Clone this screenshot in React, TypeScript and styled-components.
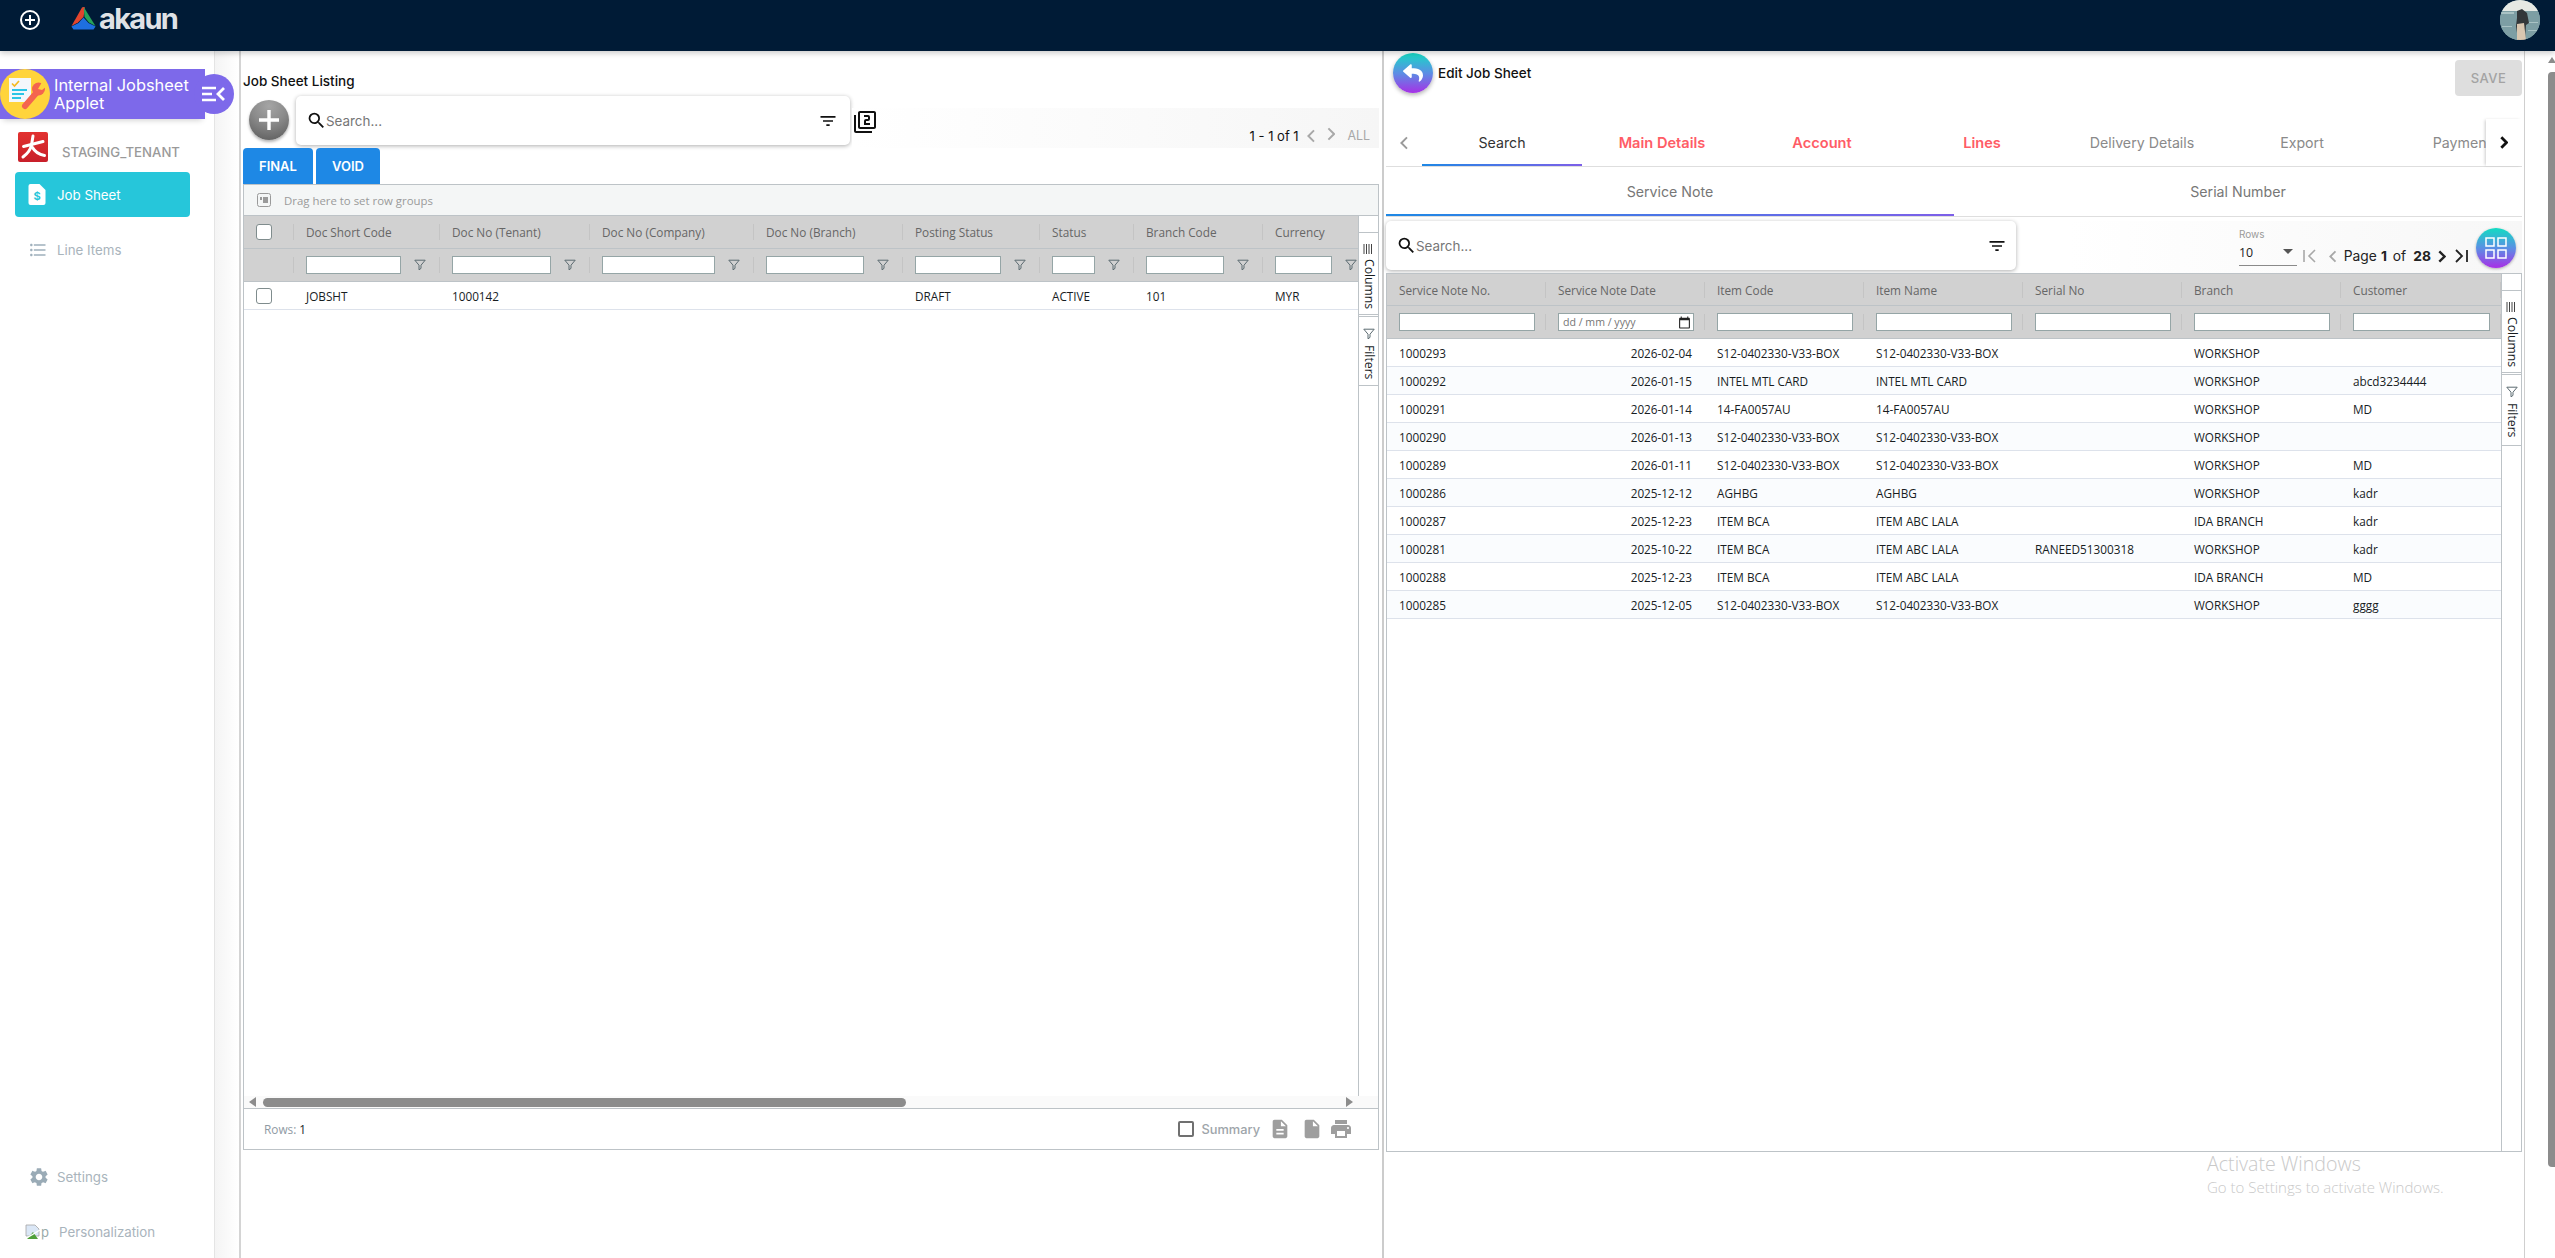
import React from "react";
import styled, { createGlobalStyle } from "styled-components";
import {
  MdCalendarToday,
  MdDescription,
  MdFilterList,
  MdFormatListBulleted,
  MdInsertDriveFile,
  MdOutlineFilter2,
  MdPrint,
  MdSearch,
  MdSettings,
} from "react-icons/md";
import { FaReply } from "react-icons/fa";

const UI_FONT = `Inter, "Noto Sans", sans-serif`;
const GRID_FONT = `"Open Sans", "Noto Sans", sans-serif`;

const GlobalStyle = createGlobalStyle`
  html, body {
    margin: 0;
    padding: 0;
    background: #fff;
    overflow: hidden;
  }
  * {
    box-sizing: border-box;
  }
`;

interface Column {
  title: string;
  width: number;
  funnel?: boolean;
  date?: boolean;
  align?: "right";
}

const leftColumns: Column[] = [
  { title: "Doc Short Code", width: 146, funnel: true },
  { title: "Doc No (Tenant)", width: 150, funnel: true },
  { title: "Doc No (Company)", width: 164, funnel: true },
  { title: "Doc No (Branch)", width: 149, funnel: true },
  { title: "Posting Status", width: 137, funnel: true },
  { title: "Status", width: 94, funnel: true },
  { title: "Branch Code", width: 129, funnel: true },
  { title: "Currency", width: 108, funnel: true },
];

const leftRows = [["JOBSHT", "1000142", "", "", "DRAFT", "ACTIVE", "101", "MYR"]];

const rightColumns: Column[] = [
  { title: "Service Note No.", width: 159 },
  { title: "Service Note Date", width: 159, date: true, align: "right" },
  { title: "Item Code", width: 159 },
  { title: "Item Name", width: 159 },
  { title: "Serial No", width: 159 },
  { title: "Branch", width: 159 },
  { title: "Customer", width: 160 },
];

const S12 = "S12-0402330-V33-BOX";

const rightRows = [
  ["1000293", "2026-02-04", S12, S12, "", "WORKSHOP", ""],
  ["1000292", "2026-01-15", "INTEL MTL CARD", "INTEL MTL CARD", "", "WORKSHOP", "abcd3234444"],
  ["1000291", "2026-01-14", "14-FA0057AU", "14-FA0057AU", "", "WORKSHOP", "MD"],
  ["1000290", "2026-01-13", S12, S12, "", "WORKSHOP", ""],
  ["1000289", "2026-01-11", S12, S12, "", "WORKSHOP", "MD"],
  ["1000286", "2025-12-12", "AGHBG", "AGHBG", "", "WORKSHOP", "kadr"],
  ["1000287", "2025-12-23", "ITEM BCA", "ITEM ABC LALA", "", "IDA BRANCH", "kadr"],
  ["1000281", "2025-10-22", "ITEM BCA", "ITEM ABC LALA", "RANEED51300318", "WORKSHOP", "kadr"],
  ["1000288", "2025-12-23", "ITEM BCA", "ITEM ABC LALA", "", "IDA BRANCH", "MD"],
  ["1000285", "2025-12-05", S12, S12, "", "WORKSHOP", "gggg"],
];

const topTabs = [
  { label: "Search", active: true },
  { label: "Main Details", error: true },
  { label: "Account", error: true },
  { label: "Lines", error: true },
  { label: "Delivery Details" },
  { label: "Export" },
  { label: "Payment" },
];

const Page = styled.div`
  position: relative;
  width: 2555px;
  height: 1258px;
  display: flex;
  flex-direction: column;
  overflow: hidden;
  font-family: ${UI_FONT};
  background: #fff;
`;

const TopBar = styled.header`
  position: relative;
  z-index: 3;
  height: 51px;
  flex: none;
  display: flex;
  align-items: flex-start;
  background: #001b36;
  box-shadow: 0 2px 6px rgba(0, 0, 0, 0.22);
  padding: 0 15px 0 20px;
`;

const AddRound = styled.div`
  width: 20px;
  height: 20px;
  margin-top: 10px;
  border: 2px solid #fff;
  border-radius: 50%;
  display: flex;
  align-items: center;
  justify-content: center;
  svg {
    display: block;
  }
`;

const Logo = styled.div`
  display: flex;
  align-items: flex-start;
  margin: 7px 0 0 31px;
  color: #dfe2e6;
  svg {
    display: block;
  }
`;

const LogoText = styled.span`
  font-family: ${UI_FONT};
  font-weight: 700;
  font-size: 29px;
  line-height: 26px;
  letter-spacing: -1.7px;
  margin: -1px 0 0 3px;
`;

const Avatar = styled.div`
  margin-left: auto;
  width: 40px;
  height: 40px;
  border-radius: 50%;
  overflow: hidden;
  svg {
    display: block;
  }
`;

const Body = styled.div`
  flex: 1;
  display: flex;
  min-height: 0;
`;

const Sidebar = styled.aside`
  position: relative;
  width: 215px;
  flex: none;
  display: flex;
  flex-direction: column;
  padding-top: 18px;
  border-right: 1px solid #e4e4e4;
`;

const Strip = styled.div`
  width: 26px;
  flex: none;
  border-right: 2px solid #d4d4d4;
  background: linear-gradient(90deg, #f4f4f4, #ffffff);
`;

const Banner = styled.div`
  width: 205px;
  height: 50px;
  flex: none;
  display: flex;
  align-items: center;
  gap: 4px;
  background: #7d69ea;
  box-shadow: 0 4px 6px -3px rgba(0, 0, 0, 0.2);
`;

const BannerIcon = styled.div`
  flex: none;
  width: 50px;
  height: 50px;
  svg {
    display: block;
  }
`;

const BannerTitle = styled.div`
  color: #fff;
  font-size: 16.4px;
  line-height: 18px;
  font-weight: 400;
`;

const Toggle = styled.div`
  position: absolute;
  z-index: 2;
  left: 194px;
  top: 23px;
  width: 40px;
  height: 40px;
  border-radius: 50%;
  background: #7d69ea;
  display: flex;
  align-items: center;
  justify-content: center;
`;

const TenantRow = styled.div`
  display: flex;
  align-items: flex-end;
  gap: 14px;
  margin: 13px 0 0 18px;
  height: 30px;
`;

const TenantLogo = styled.div`
  width: 30px;
  height: 30px;
  svg {
    display: block;
  }
`;

const TenantName = styled.span`
  color: #9a9a9a;
  font-size: 13.2px;
  font-weight: 500;
  line-height: 20px;
`;

const NavItem = styled.div<{ $active?: boolean; $top?: number; $gap?: number }>`
  display: flex;
  align-items: center;
  gap: ${(p) => p.$gap ?? 11}px;
  width: 175px;
  height: 45px;
  margin: ${(p) => p.$top ?? 0}px 0 0 15px;
  padding-left: 13px;
  border-radius: 4px;
  font-size: 13.3px;
  font-weight: 400;
  background: ${(p) => (p.$active ? "#26c6da" : "transparent")};
  color: ${(p) => (p.$active ? "#fff" : "#a9b4bc")};
  svg {
    flex: none;
  }
`;

const SideFooter = styled.div`
  margin-top: auto;
  padding-bottom: 4px;
  display: flex;
  flex-direction: column;
  gap: 10px;
`;

const BrokenAlt = styled.span`
  display: inline-flex;
  align-items: flex-start;
  width: 23px;
  margin-left: -3px;
  margin-right: -1px;
  font-size: 13px;
  color: #9aa;
  svg {
    display: block;
  }
`;

const Panels = styled.main`
  flex: 1;
  min-width: 0;
  display: flex;
`;

const LeftPanel = styled.section`
  width: 1141px;
  flex: none;
  padding: 21px 3px 0 2px;
  display: flex;
  flex-direction: column;
`;

const Splitter = styled.div`
  width: 2px;
  flex: none;
  background: #cccccc;
`;

const RightPanel = styled.section`
  width: 1140px;
  flex: none;
  padding: 0 2px;
  display: flex;
  flex-direction: column;
`;

const PageEdge = styled.div`
  flex: 1;
  position: relative;
  border-left: 1px solid #cfcfcf;
  display: flex;
  justify-content: flex-end;
`;

const PageScroll = styled.div`
  width: 7px;
  display: flex;
  flex-direction: column;
  align-items: center;
`;

const ArrowUp = styled.div`
  margin-top: 6px;
  width: 0;
  height: 0;
  border-left: 4px solid transparent;
  border-right: 4px solid transparent;
  border-bottom: 6px solid #8c8c8c;
`;

const PageThumb = styled.div`
  margin-top: 9px;
  width: 7px;
  height: 1095px;
  background: #8c8c8c;
  border-radius: 4px 0 0 4px;
`;

const ListingTitle = styled.div`
  font-size: 13.5px;
  line-height: 18px;
  font-weight: 500;
  color: #111;
`;

const Toolbar = styled.div`
  display: flex;
  align-items: flex-start;
  margin-top: 6px;
  height: 52px;
`;

const AddButton = styled.div`
  flex: none;
  width: 40px;
  height: 40px;
  margin: 4px 7px 0 6px;
  border-radius: 50%;
  background: radial-gradient(circle at 50% 15%, #a5a5a5, #8a8a8a 45%, #585858 100%);
  box-shadow: 0 2px 3px rgba(0, 0, 0, 0.3);
  display: flex;
  align-items: center;
  justify-content: center;
`;

const SearchCard = styled.div<{ $width: number; $padRight: number }>`
  flex: none;
  width: ${(p) => p.$width}px;
  height: 49px;
  background: #fff;
  border-radius: 5px;
  box-shadow: 0 1px 4px rgba(0, 0, 0, 0.32);
  display: flex;
  align-items: center;
  padding: 0 ${(p) => p.$padRight}px 0 10px;
  color: #111;
`;

const SearchText = styled.span`
  flex: 1;
  margin-left: -1px;
  font-size: 13.4px;
  color: #767676;
`;

const PagerStrip = styled.div`
  flex: 1;
  height: 40px;
  margin: 12px 0 0 2px;
  display: flex;
  align-items: flex-start;
  justify-content: space-between;
  padding: 2px 9px 0 1px;
  background: linear-gradient(90deg, #ffffff, #f6f6f6);
  color: #111;
`;

const PagerRight = styled.div`
  display: flex;
  align-items: center;
  gap: 8px;
  margin-top: 17px;
  font-size: 13px;
  line-height: 16px;
  svg {
    color: #a8a8a8;
  }
`;

const AllLabel = styled.span`
  margin-left: 4px;
  color: #a8a8a8;
  font-size: 12.4px;
`;

const StatusTabs = styled.div`
  display: flex;
  gap: 3px;
  height: 36px;
  flex: none;
`;

const StatusTab = styled.div`
  padding: 0 16px;
  background: #1e88e5;
  color: #fff;
  font-size: 13px;
  font-weight: 600;
  border-radius: 4px 4px 0 0;
  display: flex;
  align-items: center;
  justify-content: center;
`;

const GridFrame = styled.div<{ $height: number }>`
  height: ${(p) => p.$height}px;
  flex: none;
  display: flex;
  flex-direction: column;
  border: 1px solid #bdc3c7;
  background: #fff;
  font-family: ${GRID_FONT};
`;

const GroupPanel = styled.div`
  height: 31px;
  flex: none;
  display: flex;
  align-items: center;
  gap: 13px;
  padding-left: 13px;
  background: #f4f6f6;
  color: #9a9a9a;
  font-size: 11.4px;
  border-bottom: 1px solid #bdc3c7;
`;

const GridBody = styled.div`
  flex: 1;
  min-height: 0;
  display: flex;
`;

const TableArea = styled.div`
  flex: 1;
  min-width: 0;
  overflow: hidden;
  display: flex;
  flex-direction: column;
`;

const HeadRow = styled.div<{ $height: number }>`
  display: flex;
  flex: none;
  height: ${(p) => p.$height}px;
  background: #d1d1d1;
  border-bottom: 1px solid #bdc3c7;
  color: #666;
  font-size: 11.8px;
  font-weight: 500;
`;

const HeadCell = styled.div<{ $width: number; $pad?: number }>`
  position: relative;
  flex: none;
  width: ${(p) => p.$width}px;
  display: flex;
  align-items: center;
  padding: 0 0 0 ${(p) => p.$pad ?? 12}px;
  white-space: nowrap;
  &::after {
    content: "";
    position: absolute;
    right: 0;
    top: 50%;
    height: 16px;
    margin-top: -8px;
    width: 1px;
    background: #c4c4c4;
  }
`;

const FilterInput = styled.div<{ $width: number }>`
  flex: none;
  width: ${(p) => p.$width}px;
  height: 18px;
  background: #fff;
  border: 1px solid #95a5a6;
`;

const DateInput = styled(FilterInput)`
  display: flex;
  align-items: center;
  justify-content: space-between;
  padding: 0 2px 0 4px;
  color: #757575;
  font-size: 10.6px;
  font-weight: 400;
  svg {
    color: #222;
  }
`;

const FunnelSlot = styled.div`
  position: absolute;
  right: 14px;
  top: 50%;
  margin-top: -6px;
  width: 12px;
  height: 12px;
  svg {
    display: block;
  }
`;

const Check = styled.span<{ $size?: number }>`
  display: block;
  flex: none;
  width: ${(p) => p.$size ?? 16}px;
  height: ${(p) => p.$size ?? 16}px;
  background: #fff;
  border: 1px solid #7f8c8d;
  border-radius: 3px;
`;

const DataRow = styled.div<{ $alt?: boolean }>`
  display: flex;
  flex: none;
  height: 28px;
  background: ${(p) => (p.$alt ? "#fafcfe" : "#fff")};
  border-bottom: 1px solid #dde2eb;
  color: #181d1f;
  font-size: 11.75px;
`;

const DataCell = styled.div<{ $width: number; $right?: boolean; $pad?: number }>`
  flex: none;
  width: ${(p) => p.$width}px;
  display: flex;
  align-items: center;
  justify-content: ${(p) => (p.$right ? "flex-end" : "flex-start")};
  padding: ${(p) => (p.$right ? "0 13px 0 0" : `0 0 0 ${p.$pad ?? 12}px`)};
  white-space: nowrap;
`;

const SideRail = styled.div`
  width: 20px;
  flex: none;
  border-left: 1px solid #bdc3c7;
  display: flex;
  flex-direction: column;
  padding-top: 16px;
`;

const RailButton = styled.div<{ $height: number }>`
  height: ${(p) => p.$height}px;
  flex: none;
  display: flex;
  flex-direction: column;
  align-items: center;
  gap: 5px;
  padding-top: 11px;
  border-top: 1px solid #bdc3c7;
  border-bottom: 1px solid #bdc3c7;
  color: #181d1f;
  font-size: 12.2px;
  margin-bottom: 1px;
`;

const RailLabel = styled.span`
  writing-mode: vertical-rl;
  line-height: 20px;
`;

const HScroll = styled.div`
  height: 12px;
  flex: none;
  display: flex;
  align-items: center;
  padding: 0 5px;
  background: #fafafa;
`;

const ScrollLeft = styled.div`
  width: 0;
  height: 0;
  border-top: 5px solid transparent;
  border-bottom: 5px solid transparent;
  border-right: 7px solid #8c8c8c;
`;

const ScrollRight = styled.div`
  margin-left: auto;
  margin-right: 20px;
  width: 0;
  height: 0;
  border-top: 5px solid transparent;
  border-bottom: 5px solid transparent;
  border-left: 7px solid #8c8c8c;
`;

const HThumb = styled.div`
  margin-left: 7px;
  width: 643px;
  height: 9px;
  background: #8c8c8c;
  border-radius: 5px;
`;

const StatusBar = styled.div`
  height: 41px;
  flex: none;
  border-top: 1px solid #bdc3c7;
  display: flex;
  align-items: center;
  padding: 0 25px 0 20px;
  color: #181d1f;
  font-size: 11.8px;
`;

const StatusLabel = styled.span`
  color: #8f9aa3;
  margin-right: 3px;
`;

const StatusTools = styled.div`
  margin-left: auto;
  display: flex;
  align-items: center;
  color: #9e9e9e;
  svg {
    display: block;
  }
`;

const SummaryCheck = styled.span`
  display: block;
  width: 16px;
  height: 16px;
  border: 2px solid #707070;
  border-radius: 2px;
  margin-right: 8px;
`;

const SummaryLabel = styled.span`
  font-family: ${UI_FONT};
  font-size: 12.8px;
  font-weight: 500;
  color: #9ea5aa;
  margin-right: 9px;
`;

const EditHeader = styled.div`
  height: 68px;
  flex: none;
  display: flex;
  align-items: flex-start;
  padding: 2px 0 0 7px;
`;

const BackButton = styled.div`
  width: 40px;
  height: 40px;
  flex: none;
  border-radius: 50%;
  background: linear-gradient(180deg, #16d9c4, #5b8fe4 50%, #a631e6);
  box-shadow: 0 2px 4px rgba(0, 0, 0, 0.3);
  display: flex;
  align-items: center;
  justify-content: center;
  color: #fff;
`;

const EditTitle = styled.div`
  margin: 12px 0 0 5px;
  font-size: 13.5px;
  line-height: 16px;
  font-weight: 500;
  color: #111;
`;

const SaveButton = styled.div`
  margin: 7px 0 0 auto;
  width: 67px;
  height: 36px;
  border-radius: 4px;
  background: #dedede;
  color: #a3a3a3;
  font-size: 13px;
  font-weight: 500;
  letter-spacing: 0.4px;
  display: flex;
  align-items: center;
  justify-content: center;
`;

const TabBar = styled.div`
  position: relative;
  height: 48px;
  flex: none;
  display: flex;
  border-bottom: 1px solid #dedede;
`;

const TabArrow = styled.div<{ $muted?: boolean; $shadow?: boolean }>`
  width: 36px;
  flex: none;
  display: flex;
  align-items: center;
  justify-content: center;
  color: ${(p) => (p.$muted ? "#9a9a9a" : "#111")};
  box-shadow: ${(p) => (p.$shadow ? "-2px 0 3px -1px rgba(0,0,0,.2)" : "none")};
`;

const TabScroller = styled.div`
  flex: 1;
  min-width: 0;
  overflow: hidden;
  display: flex;
`;

const TabItem = styled.div<{ $active?: boolean; $error?: boolean }>`
  position: relative;
  flex: none;
  width: 160px;
  display: flex;
  align-items: center;
  justify-content: center;
  white-space: nowrap;
  font-size: ${(p) => (p.$error ? 14.6 : 14.2)}px;
  font-weight: ${(p) => (p.$error ? 600 : 400)};
  color: ${(p) => (p.$error ? "#ff5c66" : p.$active ? "#333" : "#8a8a8a")};
  &::after {
    content: "";
    display: ${(p) => (p.$active ? "block" : "none")};
    position: absolute;
    left: 0;
    right: 0;
    bottom: 0;
    height: 2px;
    background: linear-gradient(90deg, #1e88e5, #7d5fe8);
  }
`;

const SubTabBar = styled.div`
  height: 50px;
  flex: none;
  display: flex;
  border-bottom: 1px solid #dedede;
`;

const SubTab = styled.div<{ $active?: boolean }>`
  position: relative;
  flex: 1;
  display: flex;
  align-items: center;
  justify-content: center;
  padding-bottom: 1px;
  font-size: 14.2px;
  color: #777;
  &::after {
    content: "";
    display: ${(p) => (p.$active ? "block" : "none")};
    position: absolute;
    left: 0;
    right: 0;
    bottom: 0;
    height: 2px;
    background: linear-gradient(90deg, #1e88e5, #7d5fe8);
  }
`;

const ListToolbar = styled.div`
  height: 52px;
  flex: none;
  margin-top: 4px;
  display: flex;
  align-items: flex-start;
  background: linear-gradient(90deg, #ffffff 60%, #f7f7f7);
`;

const RowsSelect = styled.div`
  margin-left: 223px;
  width: 58px;
  flex: none;
  padding-top: 7px;
`;

const RowsLabel = styled.div`
  font-size: 10px;
  line-height: 12px;
  color: #9a9a9a;
`;

const RowsValue = styled.div`
  height: 26px;
  display: flex;
  align-items: center;
  justify-content: space-between;
  padding-right: 4px;
  border-bottom: 1px solid #8a8a8a;
  font-family: ${GRID_FONT};
  font-size: 12.4px;
  color: #222;
  &::after {
    content: "";
    width: 0;
    height: 0;
    border-left: 5px solid transparent;
    border-right: 5px solid transparent;
    border-top: 5px solid #555;
    margin-top: -3px;
  }
`;

const PageNav = styled.div`
  margin: 26px 0 0 6px;
  display: flex;
  align-items: center;
  font-size: 13.8px;
  line-height: 18px;
  color: #222;
  svg {
    display: block;
  }
`;

const PageWord = styled.span<{ $gap?: number; $muted?: boolean }>`
  margin-left: ${(p) => p.$gap ?? 0}px;
  color: ${(p) => (p.$muted ? "#a8a8a8" : "inherit")};
`;

const PageStrong = styled.strong<{ $gap?: number }>`
  margin-left: ${(p) => p.$gap ?? 0}px;
  font-weight: 700;
`;

const ViewButton = styled.div`
  margin: 7px 0 0 8px;
  width: 40px;
  height: 40px;
  flex: none;
  border-radius: 50%;
  background: linear-gradient(180deg, #12dcc2, #5a90e4 50%, #a82fe6);
  box-shadow: 0 1px 3px rgba(0, 0, 0, 0.3);
  display: flex;
  align-items: center;
  justify-content: center;
`;

const ActivateNote = styled.div`
  position: absolute;
  left: 2207px;
  top: 1151px;
  color: #c9c9c9;
  font-family: "Open Sans", sans-serif;
  font-weight: 300;
  pointer-events: none;
`;

const ActivateTitle = styled.div`
  font-size: 19.6px;
  line-height: 26px;
`;

const ActivateSub = styled.div`
  font-size: 15px;
  line-height: 20px;
`;

const Funnel = () => (
  <svg width="12" height="12" viewBox="0 0 12 12" fill="none" stroke="#5b6a70" strokeWidth="1">
    <path d="M0.8 1.2h10.4L7 6.2v3.2L5 10.8V6.2z" />
  </svg>
);

const Chevron = ({ dir, size = 14, width = 2 }: { dir: "l" | "r"; size?: number; width?: number }) => (
  <svg width={size * 0.6} height={size} viewBox="0 0 6 10" fill="none" stroke="currentColor" strokeWidth={width * 0.7}>
    <path d={dir === "l" ? "M5 1L1 5l4 4" : "M1 1l4 4-4 4"} />
  </svg>
);

const LogoMark = () => (
  <svg width="25" height="23" viewBox="0 0 25 23">
    <path d="M11 0.5c0.8-0.7 2.2-0.7 3 0l0 0L12.5 10 7 15.5 0.5 19z" fill="#e2452d" />
    <path d="M12.7 0L24.5 19 18 15.5 13.5 10z" fill="#27a35a" />
    <path d="M12.5 10.5L17.5 16 24.6 19.5 22.5 22.6H2.5L0.4 19.5 7.5 16z" fill="#1e6fe0" />
  </svg>
);

const AppGlyph = () => (
  <svg width="50" height="50" viewBox="0 0 50 50">
    <circle cx="25" cy="25" r="25" fill="#ffd43b" />
    <path d="M9 9h22v24H9z" fill="#f4f7fb" />
    <path d="M12 14.5l2.5 2.5 4.5-5" fill="none" stroke="#f5b921" strokeWidth="1.7" />
    <path d="M12 21h15M12 25h12M12 29h9" stroke="#2cc5e6" strokeWidth="1.8" />
    <path d="M25 37L38 22" stroke="#f4644f" strokeWidth="6" strokeLinecap="round" />
    <circle cx="38.5" cy="20" r="6.5" fill="#f4644f" />
    <path d="M38 20l4-7 5 4-5 4z" fill="#ffd43b" />
  </svg>
);

const TenantGlyph = () => (
  <svg width="30" height="30" viewBox="0 0 30 30">
    <defs>
      <linearGradient id="tenantRed" x1="0" y1="0" x2="0" y2="1">
        <stop offset="0" stopColor="#e2312f" />
        <stop offset="1" stopColor="#c81f2a" />
      </linearGradient>
    </defs>
    <rect width="30" height="30" rx="2" fill="url(#tenantRed)" />
    <g fill="none" stroke="#fff" strokeWidth="3" strokeLinecap="round">
      <path d="M15 4L13.5 13C12.5 18 9 22 5 25" />
      <path d="M5.5 14.5L25 9.5" />
      <path d="M14.5 15.5C17 20 21 22.5 26.5 23.5" />
    </g>
  </svg>
);

const BrokenImage = () => (
  <svg width="16" height="16" viewBox="0 0 16 16">
    <path d="M1 1h9l4 4v7H1z" fill="#dbe7f6" stroke="#a4a4a4" strokeWidth="0.8" />
    <path d="M2 15l6-7 5 7z" fill="#4fa03a" />
    <path d="M0 15L15 6" stroke="#fff" strokeWidth="1.4" />
  </svg>
);

const DocDollar = () => (
  <svg width="18" height="21" viewBox="0 0 18 21">
    <path d="M2 0h9l6 6v13a2 2 0 0 1-2 2H2a2 2 0 0 1-2-2V2a2 2 0 0 1 2-2z" fill="#fff" transform="translate(0.5 0)" />
    <text x="9" y="16" textAnchor="middle" fontSize="11" fontWeight="700" fill="#26c6da" fontFamily="Inter, sans-serif">
      $
    </text>
  </svg>
);

const GroupIcon = () => (
  <svg width="14" height="14" viewBox="0 0 14 14" fill="none">
    <rect x="0.5" y="0.5" width="13" height="13" rx="2" stroke="#9a9a9a" />
    <path d="M3 4h2v3H3zM6 4h5v6H6z" fill="#9a9a9a" />
  </svg>
);

const ColumnsIcon = () => (
  <svg width="11" height="10" viewBox="0 0 11 10" fill="none" stroke="#444" strokeWidth="1">
    <path d="M1 0v10M3.5 0v10M6 0v10M8.5 0v10" />
  </svg>
);

const AvatarPhoto = () => (
  <svg width="40" height="40" viewBox="0 0 40 40">
    <rect width="40" height="40" fill="#8fb0b4" />
    <rect width="40" height="11" fill="#e6e9e4" />
    <path d="M0 11h40v29H0z" fill="#7d9ea4" />
    <path d="M0 12h14v2H0zM24 22h14v1H24zM2 26h10v1H2zM28 30h10v1H28z" fill="#a9c2c4" />
    <path d="M17 11l5-2 5 4 2 10-3 2-1 15h-7l-2-14 1-8z" fill="#33373a" />
    <path d="M17 24l7-1 2 17h-9z" fill="#d9c6b0" />
  </svg>
);

const GridHeader = ({ columns, check, titleHeight }: { columns: Column[]; check?: boolean; titleHeight: number }) => (
  <>
    <HeadRow $height={titleHeight}>
      {check && (
        <HeadCell $width={50} $pad={12}>
          <Check />
        </HeadCell>
      )}
      {columns.map((col) => (
        <HeadCell key={col.title} $width={col.width}>
          {col.title}
        </HeadCell>
      ))}
    </HeadRow>
    <HeadRow $height={33}>
      {check && <HeadCell $width={50} />}
      {columns.map((col) => (
        <HeadCell key={col.title} $width={col.width}>
          {col.date ? (
            <DateInput $width={col.width - 23}>
              dd / mm / yyyy
              <MdCalendarToday size={13} />
            </DateInput>
          ) : (
            <FilterInput $width={col.width - (col.funnel ? 51 : 23)} />
          )}
          {col.funnel && (
            <FunnelSlot>
              <Funnel />
            </FunnelSlot>
          )}
        </HeadCell>
      ))}
    </HeadRow>
  </>
);

const GridRows = ({ columns, rows, check }: { columns: Column[]; rows: string[][]; check?: boolean }) => (
  <>
    {rows.map((row, index) => (
      <DataRow key={row.join("|") + index} $alt={index % 2 === 1}>
        {check && (
          <DataCell $width={50} $pad={12}>
            <Check />
          </DataCell>
        )}
        {row.map((value, i) => (
          <DataCell key={i} $width={columns[i].width} $right={columns[i].align === "right"}>
            {value}
          </DataCell>
        ))}
      </DataRow>
    ))}
  </>
);

const Rail = ({ second }: { second: number }) => (
  <SideRail>
    <RailButton $height={83}>
      <ColumnsIcon />
      <RailLabel>Columns</RailLabel>
    </RailButton>
    <RailButton $height={second}>
      <Funnel />
      <RailLabel>Filters</RailLabel>
    </RailButton>
  </SideRail>
);

export default function App() {
  return (
    <Page>
      <GlobalStyle />
      <TopBar>
        <AddRound>
          <svg width="12" height="12" viewBox="0 0 12 12" stroke="#fff" strokeWidth="2">
            <path d="M6 1v10M1 6h10" />
          </svg>
        </AddRound>
        <Logo>
          <LogoMark />
          <LogoText>akaun</LogoText>
        </Logo>
        <Avatar>
          <AvatarPhoto />
        </Avatar>
      </TopBar>
      <Body>
        <Sidebar>
          <Banner>
            <BannerIcon>
              <AppGlyph />
            </BannerIcon>
            <BannerTitle>
              Internal Jobsheet
              <br />
              Applet
            </BannerTitle>
          </Banner>
          <Toggle>
            <svg width="24" height="18" viewBox="0 0 24 18" fill="none" stroke="#fff" strokeWidth="2.4">
              <path d="M0 3h14M0 9h10M0 15h14" />
              <path d="M22 3l-6 6 6 6" strokeWidth="2.8" />
            </svg>
          </Toggle>
          <TenantRow>
            <TenantLogo>
              <TenantGlyph />
            </TenantLogo>
            <TenantName>STAGING_TENANT</TenantName>
          </TenantRow>
          <NavItem $active $top={10}>
            <DocDollar />
            Job Sheet
          </NavItem>
          <NavItem $top={10} $gap={9}>
            <MdFormatListBulleted size={20} color="#9fb0bc" />
            Line Items
          </NavItem>
          <SideFooter>
            <NavItem $gap={7}>
              <MdSettings size={22} color="#9aabb6" />
              Settings
            </NavItem>
            <NavItem $gap={12}>
              <BrokenAlt>
                <BrokenImage />p
              </BrokenAlt>
              Personalization
            </NavItem>
          </SideFooter>
        </Sidebar>
        <Strip />
        <Panels>
          <LeftPanel>
            <ListingTitle>Job Sheet Listing</ListingTitle>
            <Toolbar>
              <AddButton>
                <svg width="20" height="20" viewBox="0 0 20 20" stroke="#fff" strokeWidth="3.4">
                  <path d="M10 0v20M0 10h20" />
                </svg>
              </AddButton>
              <SearchCard $width={554} $padRight={12}>
                <MdSearch size={21} />
                <SearchText>Search...</SearchText>
                <MdFilterList size={20} />
              </SearchCard>
              <PagerStrip>
                <MdOutlineFilter2 size={24} />
                <PagerRight>
                  1 - 1 of 1
                  <Chevron dir="l" />
                  <PageWord $gap={4}>
                    <Chevron dir="r" />
                  </PageWord>
                  <AllLabel>ALL</AllLabel>
                </PagerRight>
              </PagerStrip>
            </Toolbar>
            <StatusTabs>
              <StatusTab>FINAL</StatusTab>
              <StatusTab>VOID</StatusTab>
            </StatusTabs>
            <GridFrame $height={966}>
              <GroupPanel>
                <GroupIcon />
                Drag here to set row groups
              </GroupPanel>
              <GridBody>
                <TableArea>
                  <GridHeader columns={leftColumns} titleHeight={33} check />
                  <GridRows columns={leftColumns} rows={leftRows} check />
                </TableArea>
                <Rail second={70} />
              </GridBody>
              <HScroll>
                <ScrollLeft />
                <HThumb />
                <ScrollRight />
              </HScroll>
              <StatusBar>
                <StatusLabel>Rows:</StatusLabel>1
                <StatusTools>
                  <SummaryCheck />
                  <SummaryLabel>Summary</SummaryLabel>
                  <MdDescription size={22} />
                  <MdInsertDriveFile size={22} style={{ marginLeft: 10 }} />
                  <MdPrint size={24} style={{ marginLeft: 6 }} />
                </StatusTools>
              </StatusBar>
            </GridFrame>
          </LeftPanel>
          <Splitter />
          <RightPanel>
            <EditHeader>
              <BackButton>
                <FaReply size={20} />
              </BackButton>
              <EditTitle>Edit Job Sheet</EditTitle>
              <SaveButton>SAVE</SaveButton>
            </EditHeader>
            <TabBar>
              <TabArrow $muted>
                <Chevron dir="l" size={14} />
              </TabArrow>
              <TabScroller>
                {topTabs.map((tab) => (
                  <TabItem key={tab.label} $active={tab.active} $error={tab.error}>
                    {tab.label}
                  </TabItem>
                ))}
              </TabScroller>
              <TabArrow $shadow>
                <Chevron dir="r" size={13} width={3} />
              </TabArrow>
            </TabBar>
            <SubTabBar>
              <SubTab $active>Service Note</SubTab>
              <SubTab>Serial Number</SubTab>
            </SubTabBar>
            <ListToolbar>
              <SearchCard $width={630} $padRight={9}>
                <MdSearch size={21} />
                <SearchText>Search...</SearchText>
                <MdFilterList size={20} />
              </SearchCard>
              <RowsSelect>
                <RowsLabel>Rows</RowsLabel>
                <RowsValue>10</RowsValue>
              </RowsSelect>
              <PageNav>
                <svg width="14" height="14" viewBox="0 0 14 14" fill="none" stroke="#a8a8a8" strokeWidth="1.6">
                  <path d="M1 1v12M12 1L6 7l6 6" />
                </svg>
                <PageWord $gap={12} $muted>
                  <Chevron dir="l" size={13} />
                </PageWord>
                <PageWord $gap={7}>Page</PageWord>
                <PageStrong $gap={4}>1</PageStrong>
                <PageWord $gap={6}>of</PageWord>
                <PageStrong $gap={7}>28</PageStrong>
                <PageWord $gap={7}>
                  <Chevron dir="r" size={13} width={2.6} />
                </PageWord>
                <PageWord $gap={9}>
                  <svg width="13" height="14" viewBox="0 0 13 14" fill="none" stroke="#222" strokeWidth="1.8">
                    <path d="M1 1l6 6-6 6M12 1v12" />
                  </svg>
                </PageWord>
              </PageNav>
              <ViewButton>
                <svg width="22" height="22" viewBox="0 0 22 22" fill="none" stroke="#fff" strokeWidth="1.5">
                  <path d="M1 1h8v8H1zM13 1h8v8h-8zM1 13h8v8H1zM13 13h8v8h-8z" />
                </svg>
              </ViewButton>
            </ListToolbar>
            <GridFrame $height={879}>
              <GridBody>
                <TableArea>
                  <GridHeader columns={rightColumns} titleHeight={32} />
                  <GridRows columns={rightColumns} rows={rightRows} />
                </TableArea>
                <Rail second={72} />
              </GridBody>
            </GridFrame>
          </RightPanel>
          <PageEdge>
            <PageScroll>
              <ArrowUp />
              <PageThumb />
            </PageScroll>
          </PageEdge>
        </Panels>
      </Body>
      <ActivateNote>
        <ActivateTitle>Activate Windows</ActivateTitle>
        <ActivateSub>Go to Settings to activate Windows.</ActivateSub>
      </ActivateNote>
    </Page>
  );
}
